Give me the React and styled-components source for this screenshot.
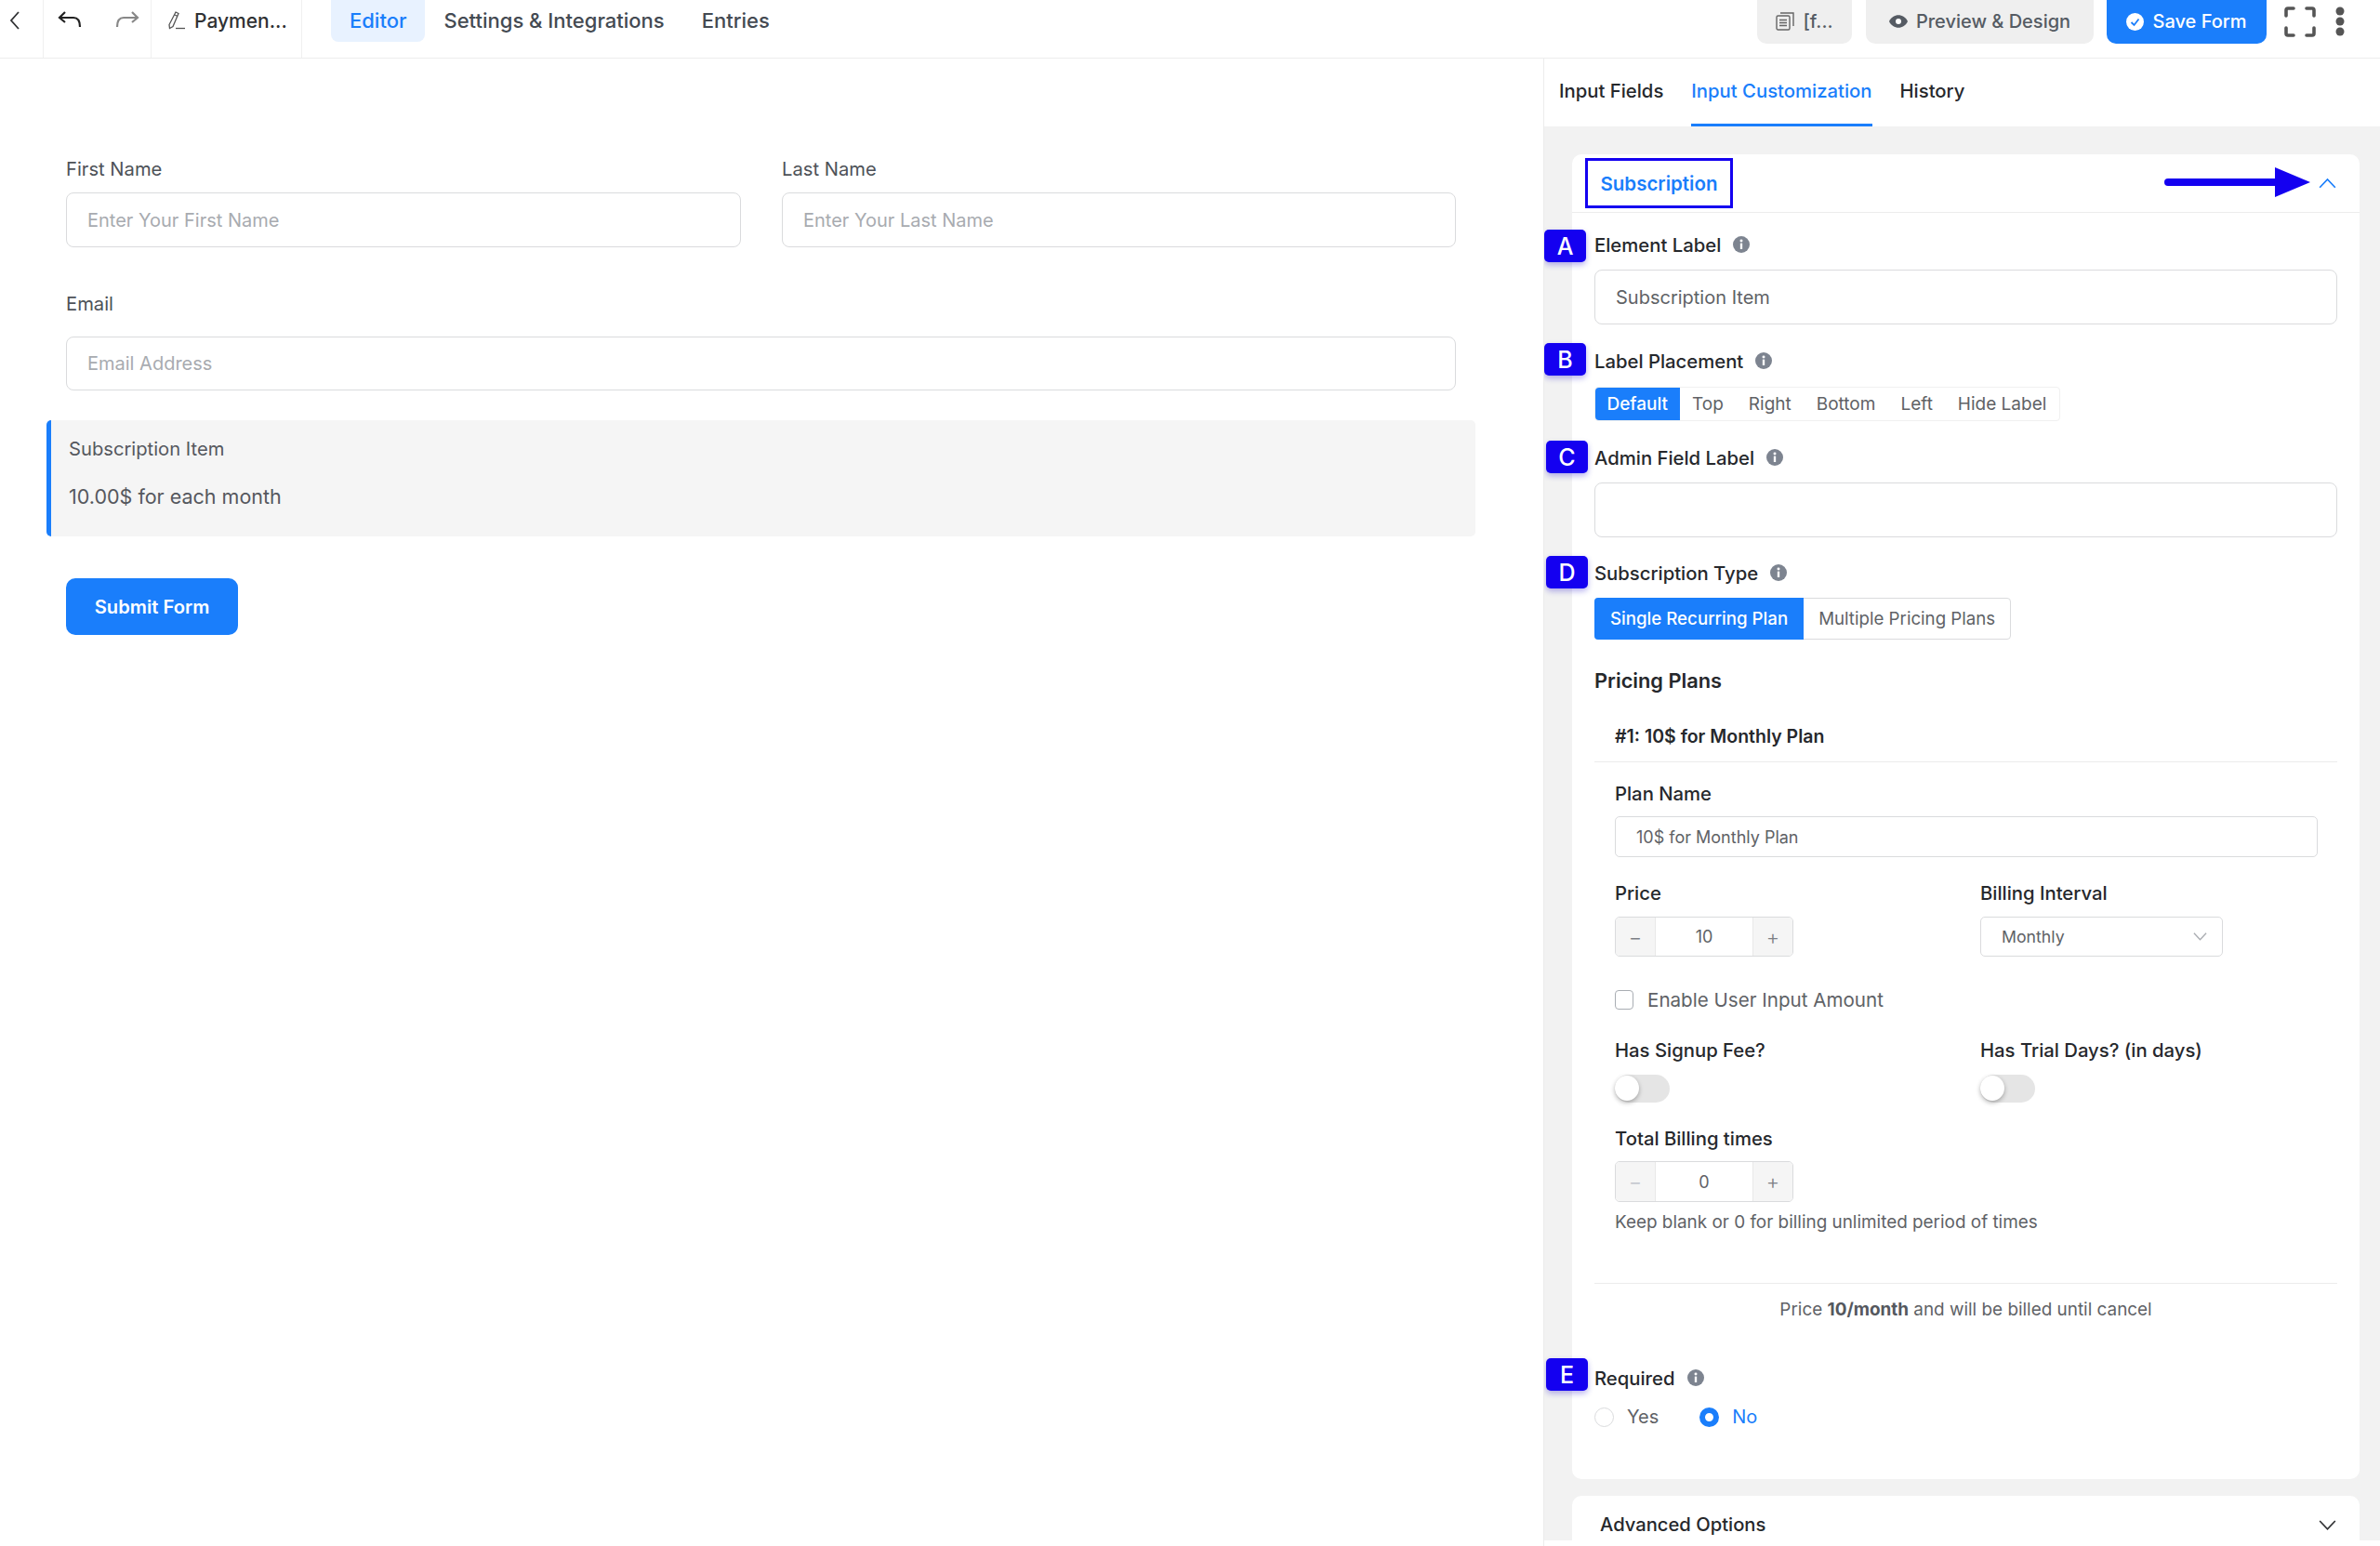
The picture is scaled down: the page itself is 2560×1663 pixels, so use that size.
import React from "react";
import styled, { createGlobalStyle } from "styled-components";

const GlobalStyle = createGlobalStyle`
  html, body { margin: 0; padding: 0; background: #fff; }
  * { box-sizing: border-box; }
  body { font-family: Inter, "Noto Sans", sans-serif; color: #1e1f21; }
`;

const BLUE = "#1a7efb";
const MARK = "#1400f0";

const Page = styled.div`
  width: 2560px;
  height: 1663px;
  overflow: hidden;
  display: flex;
  flex-direction: column;
`;

// Top bar
const TopBar = styled.header`
  height: 63px;
  flex: none;
  display: flex;
  align-items: stretch;
  border-bottom: 1px solid #ececec;
`;

const BarCell = styled.div`
  width: ${(p) => p.$w}px;
  flex: none;
  display: flex;
  align-items: flex-start;
  gap: ${(p) => p.$gap || 0}px;
  padding: 12px 0 0 ${(p) => p.$pad}px;
  border-right: 1px solid #f0f0f0;
`;

const FormName = styled.span`
  font-size: 21px;
  font-weight: 500;
  line-height: 22px;
  color: #303133;
  margin-left: 9px;
`;

const NavTabs = styled.nav`
  display: flex;
  align-items: flex-start;
  margin-left: 31px;
`;

const NavTab = styled.div`
  height: 45px;
  padding: 0 20px 2px;
  display: flex;
  align-items: center;
  font-size: 22px;
  font-weight: 500;
  color: ${(p) => (p.$active ? BLUE : "#444a52")};
  background: ${(p) => (p.$active ? "#e8f2ff" : "transparent")};
  border-radius: 0 0 8px 8px;
`;

const BarActions = styled.div`
  margin-left: auto;
  display: flex;
  align-items: flex-start;
  padding-right: 38px;
`;

const BarButton = styled.div`
  height: 47px;
  width: ${(p) => p.$w}px;
  margin-right: ${(p) => p.$mr}px;
  padding-bottom: 1px;
  display: flex;
  align-items: center;
  justify-content: center;
  gap: 9px;
  font-size: 20px;
  font-weight: 500;
  border-radius: 0 0 10px 10px;
  color: ${(p) => (p.$primary ? "#fff" : "#555b63")};
  background: ${(p) => (p.$primary ? BLUE : "#efefef")};
`;

const BarIcons = styled.div`
  display: flex;
  align-items: flex-start;
  gap: 21px;
  padding-top: 7px;
  margin-left: 5px;
`;

const Main = styled.div`
  flex: 1;
  display: flex;
  min-height: 0;
`;

// Left form preview
const Canvas = styled.section`
  width: 1660px;
  flex: none;
  padding: 0 73px 0 50px;
`;

const NameRow = styled.div`
  display: grid;
  grid-template-columns: 726px 725px;
  gap: 44px;
  padding: 107px 0 0 21px;
`;

const FormLabel = styled.label`
  display: block;
  font-size: 20.2px;
  line-height: 24px;
  color: #4e5258;
  margin-bottom: ${(p) => p.$mb || 13}px;
`;

const Fake = styled.div`
  height: ${(p) => p.$h}px;
  display: flex;
  align-items: center;
  padding-left: ${(p) => p.$pad || 22}px;
  border: 1.5px solid #dadbdd;
  border-radius: ${(p) => p.$r || 8}px;
  background: #fff;
  font-size: ${(p) => p.$fs || 20}px;
  color: ${(p) => p.$color || "#a8abb0"};
`;

const EmailField = styled.div`
  padding: 49px 21px 0 21px;
`;

const ItemBlock = styled.div`
  margin-top: 32px;
  height: 125px;
  background: #f5f5f5;
  border-left: 5px solid ${BLUE};
  border-radius: 5px;
  padding: 19px 0 0 19px;
  color: #55585e;
`;

const ItemTitle = styled.div`
  font-size: 20.2px;
  line-height: 24px;
`;

const ItemPrice = styled.div`
  font-size: 21.5px;
  line-height: 26px;
  margin-top: 26px;
`;

const SubmitButton = styled.div`
  margin: 45px 0 0 21px;
  width: 185px;
  height: 61px;
  display: flex;
  align-items: center;
  justify-content: center;
  border-radius: 10px;
  background: ${BLUE};
  color: #fff;
  font-size: 20.2px;
  font-weight: 600;
`;

// Right settings panel
const Panel = styled.aside`
  flex: 1;
  display: flex;
  flex-direction: column;
  border-left: 1px solid #ececec;
  min-width: 0;
  padding-bottom: 6px;
`;

const PanelTabs = styled.div`
  height: 73px;
  flex: none;
  display: flex;
  gap: 30px;
  padding-left: 16px;
`;

const PanelTab = styled.div`
  display: flex;
  align-items: center;
  padding-bottom: 1px;
  font-size: 20.3px;
  font-weight: 500;
  color: ${(p) => (p.$active ? BLUE : "#26282c")};
  border-bottom: 3px solid ${(p) => (p.$active ? BLUE : "transparent")};
`;

const PanelBody = styled.div`
  flex: 1;
  min-height: 0;
  overflow: hidden;
  background: #f2f2f2;
  padding: 30px 22px 0 30px;
`;

const Card = styled.div`
  background: #fff;
  border-radius: 10px;
`;

const CardHead = styled.div`
  position: relative;
  height: 63px;
  display: flex;
  align-items: center;
  justify-content: space-between;
  padding: 0 25px 0 14px;
  border-bottom: 1px solid #ededed;
`;

const CardTitle = styled.div`
  height: 54px;
  width: 159px;
  display: flex;
  align-items: center;
  justify-content: center;
  border: 3.5px solid ${MARK};
  font-size: 20.5px;
  font-weight: 600;
  color: ${BLUE};
`;

const Arrow = styled.svg`
  position: absolute;
  left: 637px;
  top: 13px;
`;

const CardBody = styled.div`
  padding: 22px 24px 55px;
  position: relative;
`;

const Field = styled.div`
  position: relative;
  margin-top: ${(p) => p.$mt || 0}px;
  padding-right: ${(p) => p.$pr || 0}px;
`;

const Badge = styled.div`
  position: absolute;
  left: ${(p) => p.$left || -52}px;
  top: ${(p) => p.$top}px;
  width: 45px;
  height: 35px;
  display: flex;
  align-items: center;
  justify-content: center;
  background: ${MARK};
  color: #fff;
  font-size: 25px;
  font-weight: 500;
  border-radius: 5px;
  box-shadow: 0 3px 6px rgba(20, 0, 200, 0.3);
`;

const Label = styled.div`
  display: flex;
  align-items: center;
  gap: 13px;
  height: 24px;
  font-size: 20.3px;
  font-weight: 500;
  color: ${(p) => p.$color || "#26282c"};
  margin-bottom: ${(p) => p.$mb ?? 14}px;
`;

const Heading = styled.div`
  font-size: 21.8px;
  line-height: 24px;
  font-weight: 600;
  color: #26282c;
`;

const Segments = styled.div`
  display: inline-flex;
  height: 37px;
  border: 1px solid #f0f0f0;
  border-radius: 4px;
  vertical-align: top;
`;

const Segment = styled.div`
  display: flex;
  align-items: center;
  padding: 0 ${(p) => (p.$active ? 12.5 : 13.5)}px;
  font-size: 19px;
  border-radius: ${(p) => (p.$active ? "4px 0 0 4px" : 0)};
  color: ${(p) => (p.$active ? "#fff" : "#606266")};
  background: ${(p) => (p.$active ? BLUE : "transparent")};
  font-weight: ${(p) => (p.$active ? 500 : 400)};
`;

const TypeSwitch = styled.div`
  display: inline-flex;
  height: 45px;
  border: 1px solid #dadbdd;
  border-radius: 4px;
  vertical-align: top;
`;

const TypeOption = styled.div`
  display: flex;
  align-items: center;
  padding: 0 ${(p) => (p.$active ? 17 : 16)}px;
  font-size: 18.7px;
  margin: ${(p) => (p.$active ? "-1px 0 -1px -1px" : 0)};
  border-radius: ${(p) => (p.$active ? "4px 0 0 4px" : 0)};
  color: ${(p) => (p.$active ? "#fff" : "#606266")};
  background: ${(p) => (p.$active ? BLUE : "transparent")};
  font-weight: ${(p) => (p.$active ? 500 : 400)};
`;

const Plan = styled.div`
  padding: 0 0 0 22px;
`;

const PlanTitle = styled.div`
  font-size: 19.5px;
  line-height: 24px;
  font-weight: 600;
  color: #26282c;
  margin-top: 36px;
  padding-left: 22px;
`;

const Divider = styled.div`
  height: 1px;
  background: #ececec;
  margin-top: ${(p) => p.$mt}px;
`;

const Columns = styled.div`
  display: grid;
  grid-template-columns: 393px 1fr;
  margin-top: ${(p) => p.$mt}px;
`;

const Stepper = styled.div`
  width: 192px;
  height: ${(p) => p.$h || 43}px;
  display: flex;
  border: 1.5px solid #dadbdd;
  border-radius: 5px;
  overflow: hidden;
`;

const StepButton = styled.div`
  width: 42px;
  flex: none;
  display: flex;
  align-items: center;
  justify-content: center;
  background: #f5f5f5;
  font-size: 22px;
  font-weight: 300;
  color: ${(p) => (p.$muted ? "#c0c4cc" : "#7c7f85")};
`;

const StepValue = styled.div`
  flex: 1;
  display: flex;
  align-items: center;
  justify-content: center;
  font-size: 18px;
  color: #606266;
  border-left: 1px solid #e8e8e8;
  border-right: 1px solid #e8e8e8;
`;

const SelectBox = styled.div`
  width: 261px;
  height: 43px;
  display: flex;
  align-items: center;
  justify-content: space-between;
  padding: 0 16px 0 22px;
  border: 1.5px solid #dadbdd;
  border-radius: 5px;
  font-size: 17.7px;
  color: #606266;
`;

const CheckRow = styled.div`
  display: flex;
  align-items: center;
  gap: 15px;
  height: 24px;
  margin-top: 34px;
  font-size: 20.6px;
  color: #606266;
`;

const CheckBox = styled.span`
  width: 20px;
  height: 21px;
  border: 1.5px solid #a9adb3;
  border-radius: 4px;
`;

const Toggle = styled.div`
  position: relative;
  width: 59px;
  height: 30px;
  border-radius: 15px;
  background: #e5e5e5;

  &::after {
    content: "";
    position: absolute;
    left: 0;
    top: 1px;
    width: 26px;
    height: 27px;
    border-radius: 50%;
    background: #fff;
    box-shadow: 0 2px 5px rgba(0, 0, 0, 0.3);
  }
`;

const Help = styled.div`
  margin-top: 10px;
  font-size: 18.9px;
  line-height: 24px;
  color: #606266;
`;

const Summary = styled.div`
  margin-top: 16px;
  font-size: 18.9px;
  line-height: 24px;
  color: #606266;
  text-align: center;

  b { font-weight: 700; color: #55585e; }
`;

const RadioRow = styled.div`
  display: flex;
  align-items: center;
  height: 24px;
  font-size: 20px;
`;

const Radio = styled.span`
  width: 21px;
  height: 21px;
  flex: none;
  border-radius: 50%;
  background: #fff;
  border: ${(p) => (p.$on ? `6px solid ${BLUE}` : "1.5px solid #dadbdd")};
`;

const RadioText = styled.span`
  margin: 0 ${(p) => p.$mr || 0}px 0 14px;
  color: ${(p) => (p.$on ? BLUE : "#606266")};
`;

const CollapsedCard = styled(Card)`
  margin-top: 18px;
  height: 70px;
  display: flex;
  justify-content: space-between;
  padding: 19px 25px 0 30px;
  font-size: 20.2px;
  line-height: 24px;
  font-weight: 500;
  color: #26282c;
  border-radius: 10px 10px 0 0;

  svg { margin-top: 7px; }
`;

const Info = () => (
  <svg width="18" height="18" viewBox="0 0 17 17">
    <circle cx="8.5" cy="8.5" r="8.5" fill="#7d8490" />
    <rect x="7.4" y="7.2" width="2.2" height="6" fill="#fff" />
    <circle cx="8.5" cy="4.8" r="1.4" fill="#fff" />
  </svg>
);

const Chevron = ({ up, color = "#303133", size = 19 }) => (
  <svg width={size} height={size * 0.62} viewBox="0 0 19 12" fill="none" stroke={color} strokeWidth="1.7">
    <polyline points={up ? "1,11 9.5,2 18,11" : "1,1 9.5,10 18,1"} />
  </svg>
);

const BackIcon = () => (
  <svg width="12" height="20" viewBox="0 0 12 20" fill="none" stroke="#303133" strokeWidth="1.8">
    <polyline points="10,1 2,10 10,19" />
  </svg>
);

const UndoIcon = ({ color, flip }) => (
  <svg
    width="26"
    height="18"
    viewBox="0 0 26 18"
    fill="none"
    stroke={color}
    strokeWidth="2.2"
    style={flip ? { transform: "scaleX(-1)" } : undefined}
  >
    <path d="M8 1 L2 7 L8 12 M2 7 H17 C22 7 24 10 24 17" />
  </svg>
);

const PencilIcon = () => (
  <svg width="20" height="20" viewBox="0 0 20 20" fill="none" stroke="#555" strokeWidth="1.3">
    <path d="M9 1 L12 2.5 L6 16.5 L2.5 18.5 L2 14.5 Z M8 4 L11 5.5" />
    <path d="M9 18.5 H19" />
  </svg>
);

const CopyIcon = () => (
  <svg width="20" height="20" viewBox="0 0 20 20" fill="none" stroke="#666" strokeWidth="1.4">
    <rect x="1" y="4" width="14" height="15" rx="1.5" />
    <path d="M5 1 H19 V15 M4 8.5 H12 M4 11.5 H12 M4 14.5 H12" />
  </svg>
);

const EyeIcon = () => (
  <svg width="20" height="14" viewBox="0 0 20 14">
    <path d="M0 7 C4 -2 16 -2 20 7 C16 16 4 16 0 7 Z" fill="#555b63" />
    <circle cx="10" cy="7" r="3" fill="#fff" />
  </svg>
);

const CheckIcon = () => (
  <svg width="19" height="19" viewBox="0 0 19 19">
    <circle cx="9.5" cy="9.5" r="9.5" fill="#fff" />
    <polyline points="5.5,10 8.5,13 13.5,6.5" fill="none" stroke={BLUE} strokeWidth="1.8" />
  </svg>
);

const FullscreenIcon = () => (
  <svg width="34" height="33" viewBox="0 0 34 33" fill="none" stroke="#555" strokeWidth="3.6" strokeLinecap="round">
    <path d="M2 10 V4 Q2 2 4 2 H10 M24 2 H30 Q32 2 32 4 V10 M32 23 V29 Q32 31 30 31 H24 M10 31 H4 Q2 31 2 29 V23" />
  </svg>
);

const DotsIcon = () => (
  <svg width="10" height="32" viewBox="0 0 10 32" fill="#555">
    <circle cx="5" cy="5" r="4.5" />
    <circle cx="5" cy="16" r="4.5" />
    <circle cx="5" cy="27" r="4.5" />
  </svg>
);

const App = () => (
  <Page>
    <GlobalStyle />
    <TopBar>
      <BarCell $w={47} $pad={10}>
        <BackIcon />
      </BarCell>
      <BarCell $w={116} $pad={15} $gap={36}>
        <UndoIcon color="#222" />
        <UndoIcon color="#888" flip />
      </BarCell>
      <BarCell $w={162} $pad={17}>
        <PencilIcon />
        <FormName>Paymen...</FormName>
      </BarCell>
      <NavTabs>
        <NavTab $active>Editor</NavTab>
        <NavTab>Settings &amp; Integrations</NavTab>
        <NavTab>Entries</NavTab>
      </NavTabs>
      <BarActions>
        <BarButton $w={102} $mr={15}>
          <CopyIcon />
          [f...
        </BarButton>
        <BarButton $w={245} $mr={14}>
          <EyeIcon />
          Preview &amp; Design
        </BarButton>
        <BarButton $w={172} $mr={14} $primary>
          <CheckIcon />
          Save Form
        </BarButton>
        <BarIcons>
          <FullscreenIcon />
          <DotsIcon />
        </BarIcons>
      </BarActions>
    </TopBar>
    <Main>
      <Canvas>
        <NameRow>
          <div>
            <FormLabel>First Name</FormLabel>
            <Fake $h={59}>Enter Your First Name</Fake>
          </div>
          <div>
            <FormLabel>Last Name</FormLabel>
            <Fake $h={59}>Enter Your Last Name</Fake>
          </div>
        </NameRow>
        <EmailField>
          <FormLabel $mb={23}>Email</FormLabel>
          <Fake $h={58}>Email Address</Fake>
        </EmailField>
        <ItemBlock>
          <ItemTitle>Subscription Item</ItemTitle>
          <ItemPrice>10.00$ for each month</ItemPrice>
        </ItemBlock>
        <SubmitButton>Submit Form</SubmitButton>
      </Canvas>
      <Panel>
        <PanelTabs>
          <PanelTab>Input Fields</PanelTab>
          <PanelTab $active>Input Customization</PanelTab>
          <PanelTab>History</PanelTab>
        </PanelTabs>
        <PanelBody>
          <Card>
            <CardHead>
              <CardTitle>Subscription</CardTitle>
              <Arrow width="158" height="34" viewBox="0 0 158 34">
                <line x1="4" y1="17" x2="122" y2="17" stroke={MARK} strokeWidth="8" strokeLinecap="round" />
                <polygon points="119,1 157,17 119,33" fill={MARK} />
              </Arrow>
              <Chevron up color={BLUE} />
            </CardHead>
            <CardBody>
              <Field>
                <Badge $left={-54} $top={-4}>A</Badge>
                <Label $mb={15}>
                  Element Label <Info />
                </Label>
                <Fake $h={59} $color="#606266">
                  Subscription Item
                </Fake>
              </Field>
              <Field $mt={27}>
                <Badge $left={-54} $top={-7}>B</Badge>
                <Label $mb={16}>
                  Label Placement <Info />
                </Label>
                <Segments>
                  <Segment $active>Default</Segment>
                  <Segment>Top</Segment>
                  <Segment>Right</Segment>
                  <Segment>Bottom</Segment>
                  <Segment>Left</Segment>
                  <Segment>Hide Label</Segment>
                </Segments>
              </Field>
              <Field $mt={27}>
                <Badge $top={-6}>C</Badge>
                <Label $mb={15}>
                  Admin Field Label <Info />
                </Label>
                <Fake $h={59} />
              </Field>
              <Field $mt={26}>
                <Badge $top={-6}>D</Badge>
                <Label $mb={15}>
                  Subscription Type <Info />
                </Label>
                <TypeSwitch>
                  <TypeOption $active>Single Recurring Plan</TypeOption>
                  <TypeOption>Multiple Pricing Plans</TypeOption>
                </TypeSwitch>
              </Field>
              <Field $mt={32}>
                <Heading>Pricing Plans</Heading>
              </Field>
              <PlanTitle>#1: 10$ for Monthly Plan</PlanTitle>
              <Divider $mt={15} />
              <Plan>
                <Field $mt={21} $pr={21}>
                  <Label $mb={13}>Plan Name</Label>
                  <Fake $h={44} $r={5} $fs={18} $color="#606266">
                    10$ for Monthly Plan
                  </Fake>
                </Field>
                <Columns $mt={26}>
                  <div>
                    <Label $mb={14}>Price</Label>
                    <Stepper>
                      <StepButton>−</StepButton>
                      <StepValue>10</StepValue>
                      <StepButton>+</StepButton>
                    </Stepper>
                  </div>
                  <div>
                    <Label $mb={14}>Billing Interval</Label>
                    <SelectBox>
                      Monthly
                      <Chevron color="#a8abb0" size={15} />
                    </SelectBox>
                  </div>
                </Columns>
                <CheckRow>
                  <CheckBox />
                  Enable User Input Amount
                </CheckRow>
                <Columns $mt={30}>
                  <div>
                    <Label $mb={15}>Has Signup Fee?</Label>
                    <Toggle />
                  </div>
                  <div>
                    <Label $mb={15}>Has Trial Days? (in days)</Label>
                    <Toggle />
                  </div>
                </Columns>
                <Field $mt={26}>
                  <Label $mb={13}>Total Billing times</Label>
                  <Stepper $h={44}>
                    <StepButton $muted>−</StepButton>
                    <StepValue>0</StepValue>
                    <StepButton>+</StepButton>
                  </Stepper>
                  <Help>Keep blank or 0 for billing unlimited period of times</Help>
                </Field>
              </Plan>
              <Divider $mt={53} />
              <Summary>
                Price <b>10/month</b> and will be billed until cancel
              </Summary>
              <Field $mt={49}>
                <Badge $top={-9}>E</Badge>
                <Label $mb={18}>
                  Required <Info />
                </Label>
                <RadioRow>
                  <Radio />
                  <RadioText $mr={44}>Yes</RadioText>
                  <Radio $on />
                  <RadioText $on>No</RadioText>
                </RadioRow>
              </Field>
            </CardBody>
          </Card>
          <CollapsedCard>
            Advanced Options
            <Chevron size={19} />
          </CollapsedCard>
        </PanelBody>
      </Panel>
    </Main>
  </Page>
);

export default App;
